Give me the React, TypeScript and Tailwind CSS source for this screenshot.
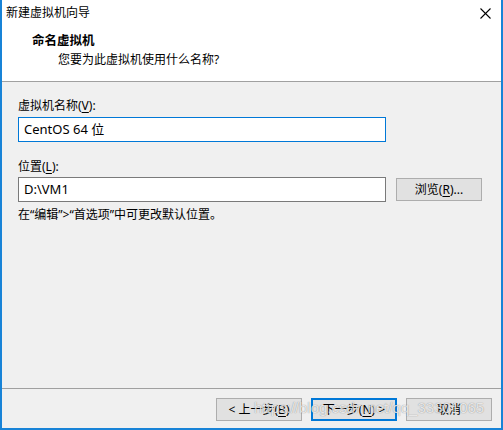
import React from "react";

const font = "font-['Noto_Sans','Noto_Sans_CJK_SC',sans-serif]";

function WinButton({
  children,
  primary,
  className,
}: {
  children: React.ReactNode;
  primary?: boolean;
  className?: string;
}) {
  return (
    <div
      className={`flex h-[23px] items-center justify-center bg-[#e1e1e1] text-[12px] leading-[16px] text-black ${
        primary ? "border-2 border-[#0078d7]" : "border border-[#adadad]"
      } ${className ?? ""}`}
    >
      {children}
    </div>
  );
}

export default function App() {
  return (
    <div
      className={`relative flex h-[430px] w-[503px] flex-col overflow-hidden border-x-2 border-b-2 border-[#1883d7] bg-[#f0f0f0] text-[12px] text-black ${font}`}
    >
      {/* title bar */}
      <div className="flex h-[30px] shrink-0 items-start bg-white pl-[4px]">
        <span className="mt-[5px] flex-1 leading-[16px]">新建虚拟机向导</span>
        <div className="mr-[10px] mt-[8px] h-[11px] w-[11px] shrink-0">
          <svg width="11" height="11" viewBox="0 0 11 11" fill="none">
            <line x1="0.5" y1="0.5" x2="10.5" y2="10.5" stroke="#000000" strokeWidth="1.1" />
            <line x1="10.5" y1="0.5" x2="0.5" y2="10.5" stroke="#000000" strokeWidth="1.1" />
          </svg>
        </div>
      </div>

      {/* header */}
      <div className="h-[52px] shrink-0 border-b border-[#a0a0a0] bg-white pl-[30px] pt-[3px]">
        <div className="text-[12.5px] font-bold leading-[16px]">命名虚拟机</div>
        <div className="mt-[3px] pl-[26px] leading-[16px]">您要为此虚拟机使用什么名称?</div>
      </div>

      {/* body */}
      <div className="flex flex-1 flex-col pl-[16px] pt-[16px]">
        <div className="leading-[16px]">
          虚拟机名称(<u className="underline-offset-2">V</u>):
        </div>
        <div className="mt-[3px] flex h-[25px] w-[368px] items-center border border-[#0078d7] bg-white pl-[5px] text-[13px]">
          CentOS 64 位
        </div>

        <div className="mt-[17px] leading-[16px]">
          位置(<u className="underline-offset-2">L</u>):
        </div>
        <div className="mt-[2px] flex items-center gap-[10px]">
          <div className="flex h-[25px] w-[368px] items-center border border-[#7a7a7a] bg-white pl-[5px] text-[13px]">
            D:\VM1
          </div>
          <WinButton className="w-[86px]">
            浏览(<u className="underline-offset-2">R</u>)...
          </WinButton>
        </div>

        <div className="mt-[5px] leading-[16px]">在“编辑”&gt;“首选项”中可更改默认位置。</div>
      </div>

      {/* footer */}
      <div className="flex h-[40px] shrink-0 justify-end gap-[9px] border-t border-[#a0a0a0] pr-[9px] pt-[9px]">
        <WinButton className="w-[86px]">
          &lt; 上一步(<u className="underline-offset-2">B</u>)
        </WinButton>
        <WinButton primary className="w-[86px]">
          下一步(<u className="underline-offset-2">N</u>) &gt;
        </WinButton>
        <WinButton className="w-[86px]">取消</WinButton>
      </div>

      {/* watermark */}
      <div className="pointer-events-none absolute left-[252px] top-[399px] font-['Liberation_Sans',sans-serif] text-[15px] leading-[18px] text-white/80 [text-shadow:0_0_1px_rgba(0,0,0,0.5)]">
        https://blog.csdn.net/qq_33301065
      </div>
    </div>
  );
}
